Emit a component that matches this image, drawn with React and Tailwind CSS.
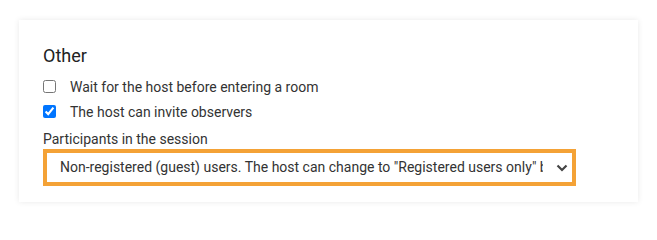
import React from 'react';

const OtherSettings = () => {
    const [waitHost, setWaitHost] = React.useState(false);
    const [invite, setInvite] = React.useState(true);
    const [participants, setParticipants] = React.useState('guest');

    return (
        <div className="bg-white w-[657px] h-[224px] pt-[20px] pl-[19px] font-['Roboto',sans-serif] text-[#333]">
            <div className="w-[619px] h-[182px] bg-white shadow-[0_0_6px_rgba(0,0,0,0.09)] pt-[24px] px-[24px]">
                <h3 className="text-[18px] leading-[24px] font-normal text-[#222]">Other</h3>

                {/* Checkboxes */}
                <div className="mt-[6px]">
                    <label className="flex items-center h-[25px] text-[14px] leading-[20px] cursor-pointer">
                        <input
                            type="checkbox"
                            className="m-0 w-[13px] h-[13px]"
                            checked={waitHost}
                            onChange={e => setWaitHost(e.target.checked)}
                        />
                        <span className="ml-[14px]">Wait for the host before entering a room</span>
                    </label>
                    <label className="flex items-center h-[25px] text-[14px] leading-[20px] cursor-pointer">
                        <input
                            type="checkbox"
                            className="m-0 w-[13px] h-[13px]"
                            checked={invite}
                            onChange={e => setInvite(e.target.checked)}
                        />
                        <span className="ml-[14px]">The host can invite observers</span>
                    </label>
                </div>

                {/* Participants select */}
                <div className="mt-[6px] text-[14px] leading-[19px]">Participants in the session</div>
                <div className="relative w-[533px] h-[37px] border-4 border-[#f4a236] bg-white">
                    <select
                        value={participants}
                        onChange={e => setParticipants(e.target.value)}
                        className="appearance-none w-full h-full bg-white pl-[13px] pr-[29px] text-[14px] text-[#333] outline-none font-['Roboto',sans-serif]"
                    >
                        <option value="guest">Non-registered (guest) users. The host can change to "Registered users only" by request</option>
                        <option value="registered">Registered users only</option>
                    </select>
                    <svg className="absolute right-[4px] top-[11px] pointer-events-none" width="12" height="8" viewBox="0 0 12 8">
                        <polyline points="1.5,1.5 6,6 10.5,1.5" fill="none" stroke="#444" strokeWidth="2.2" />
                    </svg>
                </div>
            </div>
        </div>
    );
};

export default function App() {
    return <OtherSettings />;
}
